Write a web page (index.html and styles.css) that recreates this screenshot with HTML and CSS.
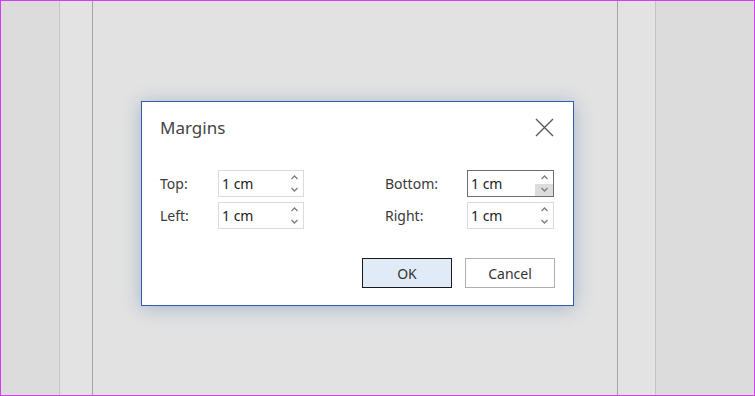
FILE: index.html
```html
<!DOCTYPE html>
<html lang="en">
<head>
    <meta charset="UTF-8">
    <meta name="viewport" content="width=device-width, initial-scale=1.0">
    <title>Margins</title>
    <link rel="stylesheet" href="styles.css">
</head>
<body>
    <div class="frame">
        <!-- document view behind the dialog -->
        <div class="backdrop">
            <div class="side"></div>
            <div class="rule light"></div>
            <div class="gutter gutter-left"></div>
            <div class="rule dark"></div>
            <div class="page"></div>
            <div class="rule dark"></div>
            <div class="gutter gutter-right"></div>
            <div class="rule light"></div>
            <div class="side"></div>
        </div>

        <div class="dialog">
            <div class="dialog-header">
                <span class="dialog-title">Margins</span>
                <button class="close-btn" title="Close">
                    <svg width="19" height="19" viewBox="0 0 19 19">
                        <path d="M1 1 L18 18 M18 1 L1 18" stroke="#5a5a5a" stroke-width="1.4" fill="none"/>
                    </svg>
                </button>
            </div>

            <div class="fields">
                <div class="field-group group-left">
                    <label>Top:</label>
                    <div class="spin">
                        <span class="spin-value">1 cm</span>
                        <div class="spin-arrows">
                            <span class="arrow"><svg width="7" height="5" viewBox="0 0 7 5"><path d="M0.5 4 L3.5 1 L6.5 4" stroke="#7d7d7d" stroke-width="1.3" fill="none"/></svg></span>
                            <span class="arrow"><svg width="7" height="5" viewBox="0 0 7 5"><path d="M0.5 1 L3.5 4 L6.5 1" stroke="#7d7d7d" stroke-width="1.3" fill="none"/></svg></span>
                        </div>
                    </div>
                    <label>Left:</label>
                    <div class="spin">
                        <span class="spin-value">1 cm</span>
                        <div class="spin-arrows">
                            <span class="arrow"><svg width="7" height="5" viewBox="0 0 7 5"><path d="M0.5 4 L3.5 1 L6.5 4" stroke="#7d7d7d" stroke-width="1.3" fill="none"/></svg></span>
                            <span class="arrow"><svg width="7" height="5" viewBox="0 0 7 5"><path d="M0.5 1 L3.5 4 L6.5 1" stroke="#7d7d7d" stroke-width="1.3" fill="none"/></svg></span>
                        </div>
                    </div>
                </div>

                <div class="field-group group-right">
                    <label>Bottom:</label>
                    <div class="spin focused">
                        <span class="spin-value">1 cm</span>
                        <div class="spin-arrows">
                            <span class="arrow"><svg width="7" height="5" viewBox="0 0 7 5"><path d="M0.5 4 L3.5 1 L6.5 4" stroke="#7d7d7d" stroke-width="1.3" fill="none"/></svg></span>
                            <span class="arrow hover"><svg width="7" height="5" viewBox="0 0 7 5"><path d="M0.5 1 L3.5 4 L6.5 1" stroke="#7d7d7d" stroke-width="1.3" fill="none"/></svg></span>
                        </div>
                    </div>
                    <label>Right:</label>
                    <div class="spin">
                        <span class="spin-value">1 cm</span>
                        <div class="spin-arrows">
                            <span class="arrow"><svg width="7" height="5" viewBox="0 0 7 5"><path d="M0.5 4 L3.5 1 L6.5 4" stroke="#7d7d7d" stroke-width="1.3" fill="none"/></svg></span>
                            <span class="arrow"><svg width="7" height="5" viewBox="0 0 7 5"><path d="M0.5 1 L3.5 4 L6.5 1" stroke="#7d7d7d" stroke-width="1.3" fill="none"/></svg></span>
                        </div>
                    </div>
                </div>
            </div>

            <div class="buttons">
                <button class="btn btn-ok">OK</button>
                <button class="btn btn-cancel">Cancel</button>
            </div>
        </div>
    </div>
</body>
</html>
```

FILE: styles.css
```css
body {
    margin: 0;
    font-family: 'Noto Sans', 'Open Sans', sans-serif;
    background: #dcdcdc;
}
.frame {
    position: relative;
    width: 755px;
    height: 396px;
    box-sizing: border-box;
    border: 1px solid #d23ff2;
    overflow: hidden;
}
.backdrop {
    display: flex;
    height: 100%;
}
.side {
    background: #dcdcdc;
}
.side:first-child {
    width: 58px;
}
.side:last-child {
    width: 98px;
}
.rule {
    width: 1px;
}
.rule.light {
    background: #c4c4c4;
}
.rule.dark {
    background: #a3a3a3;
}
.gutter {
    background: #e3e3e3;
}
.gutter-left {
    width: 32px;
}
.gutter-right {
    width: 37px;
}
.page {
    width: 524px;
    background: #e2e2e2;
}

/* dialog */
.dialog {
    position: absolute;
    left: 140px;
    top: 100px;
    width: 433px;
    box-sizing: border-box;
    background: #fff;
    border: 1px solid #2f5ea8;
    box-shadow: 0 2px 18px rgba(43, 87, 154, 0.32);
    padding: 14px 18px 17px 18px;
}
.dialog-header {
    display: flex;
    justify-content: space-between;
    align-items: center;
    height: 24px;
}
.dialog-title {
    font-size: 17px;
    line-height: 24px;
    color: #444;
}
.close-btn {
    background: none;
    border: none;
    padding: 0;
    margin-right: 1px;
    margin-top: -2px;
    width: 19px;
    height: 19px;
    display: flex;
    cursor: pointer;
}
.fields {
    display: flex;
    justify-content: space-between;
    margin-top: 30px;
}
.field-group {
    display: grid;
    grid-template-rows: 27px 27px;
    row-gap: 5px;
    align-items: center;
}
.group-left {
    grid-template-columns: 58px 86px;
}
.group-right {
    grid-template-columns: 82px 87px;
    margin-right: 1px;
}
label {
    font-size: 14px;
    color: #3a3a3a;
}
.spin {
    display: flex;
    height: 27px;
    box-sizing: border-box;
    border: 1px solid #dadada;
    background: #fff;
}
.spin.focused {
    border-color: #6e6e6e;
}
.spin-value {
    flex: 1;
    font-size: 14px;
    line-height: 25px;
    padding-left: 3px;
    color: #222;
}
.spin-arrows {
    display: flex;
    flex-direction: column;
    width: 18px;
}
.arrow {
    flex: 1;
    display: flex;
    align-items: center;
    justify-content: center;
}
.arrow.hover {
    background: #dcdcdc;
}
.buttons {
    display: flex;
    justify-content: flex-end;
    gap: 13px;
    margin-top: 29px;
}
.btn {
    width: 90px;
    height: 30px;
    font-family: 'Noto Sans', 'Open Sans', sans-serif;
    font-size: 14px;
    color: #333;
    background: #fff;
    border: 1px solid #adadad;
    padding: 0;
    cursor: pointer;
}
.btn-ok {
    background: #e1ebf7;
    border-color: #1a1a1a;
}
```
